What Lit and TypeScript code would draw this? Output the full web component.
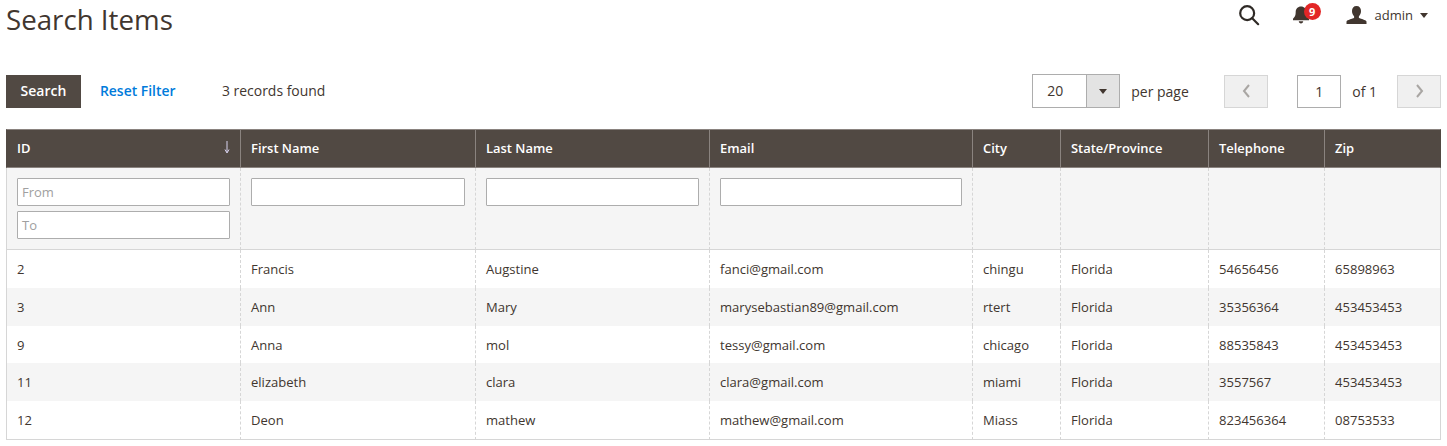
import { LitElement, html, css, svg } from "lit";
import { customElement } from "lit/decorators.js";

const COLS = [234, 235, 234, 263, 88, 148, 116, 117];
const HEADS = ["ID", "First Name", "Last Name", "Email", "City", "State/Province", "Telephone", "Zip"];
const ROWS = [
  ["2", "Francis", "Augstine", "fanci@gmail.com", "chingu", "Florida", "54656456", "65898963"],
  ["3", "Ann", "Mary", "marysebastian89@gmail.com", "rtert", "Florida", "35356364", "453453453"],
  ["9", "Anna", "mol", "tessy@gmail.com", "chicago", "Florida", "88535843", "453453453"],
  ["11", "elizabeth", "clara", "clara@gmail.com", "miami", "Florida", "3557567", "453453453"],
  ["12", "Deon", "mathew", "mathew@gmail.com", "Miass", "Florida", "823456364", "08753533"],
];

@customElement("app-root")
export class AppRoot extends LitElement {
  static styles = css`
    :host { display: block; width: 1447px; height: 446px; overflow: hidden; background: #fff; color: #41362f; font-family: "Open Sans", sans-serif; font-size: 14px; }
    * { box-sizing: border-box; }
    .top { display: flex; justify-content: space-between; align-items: flex-start; padding: 0 6px; height: 74px; }
    h1 { margin: 0; font-size: 27.7px; font-weight: 400; line-height: 38px; color: #41362f; }
    .actions { display: flex; align-items: center; height: 30px; padding-right: 13px; }
    .search { margin-right: 32px; display: flex; }
    .bell { position: relative; width: 30px; height: 30px; margin-right: 24px; display: flex; align-items: center; }
    .badge { position: absolute; left: 12px; top: 3px; width: 17px; height: 17px; border-radius: 50%; background: #e22626; color: #fff; font-size: 11px; font-weight: 700; display: flex; align-items: center; justify-content: center; line-height: 1; }
    .user { display: flex; align-items: center; font-size: 13px; color: #41362f; }
    .user svg { margin-right: 8px; }
    .caret { width: 0; height: 0; border: 4.5px solid transparent; border-top: 5px solid #41362f; border-bottom: 0; margin-left: 7px; }
    .bar { display: flex; align-items: center; justify-content: space-between; padding: 0 6px; height: 34px; margin-bottom: 21px; }
    .left, .right { display: flex; align-items: center; }
    .btn { width: 75px; height: 33px; background: #514943; color: #fff; font-weight: 600; display: flex; align-items: center; justify-content: center; padding-bottom: 2px; }
    .reset { color: #007bdb; font-weight: 600; font-size: 13.9px; margin-left: 19px; width: 122px; padding-bottom: 2px; }
    .rec { padding-bottom: 2px; font-size: 13.95px; }
    .select { display: flex; width: 88px; height: 34px; border: 1px solid #adadad; margin-right: 11px; }
    .select .val { width: 53px; padding-left: 14px; line-height: 32px; }
    .select .arrow { flex: 1; background: #e3e3e3; border-left: 1px solid #adadad; display: flex; align-items: center; justify-content: center; }
    .dark-caret { width: 0; height: 0; border: 4px solid transparent; border-top: 5px solid #41362f; border-bottom: 0; }
    .perpage { width: 93px; padding-top: 1px; }
    .nav { width: 44px; height: 33px; background: #f0f0f0; border: 1px solid #d6d6d6; display: flex; align-items: center; justify-content: center; }
    .page { width: 44px; height: 33px; border: 1px solid #adadad; margin-left: 29px; text-align: center; line-height: 31px; }
    .of { margin: 0 20px 0 11px; }
    table { border-collapse: separate; border-spacing: 0; width: 1435px; margin-left: 6px; table-layout: fixed; }
    th { height: 39px; background: #514943; color: #fff; font-weight: 600; font-size: 12.95px; text-align: left; padding: 0 10px 2px; border-top: 1px solid #8a837f; border-bottom: 1px solid #8a837f; border-left: 1px solid #8a837f; position: relative; }
    th:last-child { border-right: 1px solid #514943; }
    th:first-child { border-left-color: #514943; }
    .sort { position: absolute; right: 9px; top: 9px; }
    .filters td { height: 82px; background: #f5f5f5; vertical-align: top; padding: 10px 10px 0; border-bottom: 1px solid #d6d6d6; border-left: 1px dashed #d6d6d6; }
    .filters td:first-child { border-left: 1px solid #d6d6d6; }
    .filters td:last-child { border-right: 1px solid #d6d6d6; }
    .inp { display: block; height: 28px; width: 100%; border: 1px solid #adadad; border-radius: 1px; background: #fff; padding: 0 4px; font-size: 13px; line-height: 26px; color: #a0a0a0; }
    .inp + .inp { margin-top: 5px; }
    .data td { height: 37.75px; padding: 0 10px; font-size: 13.05px; color: #41362f; border-left: 1px dashed #d6d6d6; white-space: nowrap; }
    .data td:first-child { border-left: 1px solid #d6d6d6; }
    .data td:last-child { border-right: 1px solid #d6d6d6; }
    .data:nth-child(odd) td { background: #f5f5f5; }
    .data:nth-child(4) td { padding-top: 1px; }
    .data:last-child td { border-bottom: 1px solid #d6d6d6; height: 39px; }
  `;

  render() {
    return html`
      <div class="top">
        <h1>Search Items</h1>
        <div class="actions">
          <span class="search">
            <svg width="22" height="22" viewBox="0 0 24 24" fill="none" stroke="#2f2a26" stroke-width="2.4">
              <circle cx="10" cy="10" r="7.6"></circle><path d="M15.5 15.500 22 22" stroke-linecap="round"></path>
            </svg>
          </span>
          <span class="bell">
            <svg width="18" height="20" viewBox="0 0 18 20" fill="#41362f">
              <path d="M9 1.500c-3.200 0-5.300 2.400-5.300 5.600 0 3.300-.8 5-2.700 6.600v1.500h16v-1.500c-1.900-1.600-2.700-3.300-2.700-6.600C14.300 3.900 12.200 1.500 9 1.500z"></path>
              <path d="M6.800 16.200h4.400c0 1.300-1 2.200-2.200 2.200s-2.200-.9-2.200-2.200z"></path>
            </svg>
            <span class="badge">9</span>
          </span>
          <span class="user">
            <svg width="21" height="20" viewBox="0 0 21 20" fill="#41362f">
              <path d="M10.500 1c2.900 0 4.500 2 4.500 5 0 2.300-.9 4.300-2.100 5.200v1.900c2.500 1 6.600 1.800 7.600 3.400V19H.5v-2.500c1-1.600 5.100-2.400 7.600-3.400v-1.900C6.900 10.300 6 8.300 6 6c0-3 1.600-5 4.500-5z"></path>
            </svg>
            admin<span class="caret"></span>
          </span>
        </div>
      </div>
      <div class="bar">
        <div class="left">
          <div class="btn">Search</div>
          <div class="reset">Reset Filter</div>
          <div class="rec">3 records found</div>
        </div>
        <div class="right">
          <div class="select"><span class="val">20</span><span class="arrow"><span class="dark-caret"></span></span></div>
          <div class="perpage">per page</div>
          <div class="nav">${this.chev("M8 2 3 8l5 6")}</div>
          <div class="page">1</div>
          <div class="of">of 1</div>
          <div class="nav">${this.chev("M3 2l5 6-5 6")}</div>
        </div>
      </div>
      <table>
        <colgroup>${COLS.map((w) => html`<col style="width:${w}px" />`)}</colgroup>
        <thead>
          <tr>
            ${HEADS.map((h, i) => html`<th>${h}${i === 0 ? html`<svg class="sort" width="8" height="16" viewBox="0 0 8 16" fill="none" stroke="#d9d4f0" stroke-width="1"><path d="M4 2v11M2 10.500 4 14l2-3.500"></path></svg>` : ""}</th>`)}
          </tr>
        </thead>
        <tbody>
          <tr class="filters">
            <td><div class="inp">From</div><div class="inp">To</div></td>
            <td><div class="inp"></div></td>
            <td><div class="inp"></div></td>
            <td><div class="inp"></div></td>
            <td></td><td></td><td></td><td></td>
          </tr>
          ${ROWS.map((r) => html`<tr class="data">${r.map((c) => html`<td>${c}</td>`)}</tr>`)}
        </tbody>
      </table>
    `;
  }

  chev(d: string) {
    return html`<svg width="11" height="16" viewBox="0 0 11 16" fill="none" stroke="#a9a6a3" stroke-width="2">${svg`<path d=${d}></path>`}</svg>`;
  }
}
